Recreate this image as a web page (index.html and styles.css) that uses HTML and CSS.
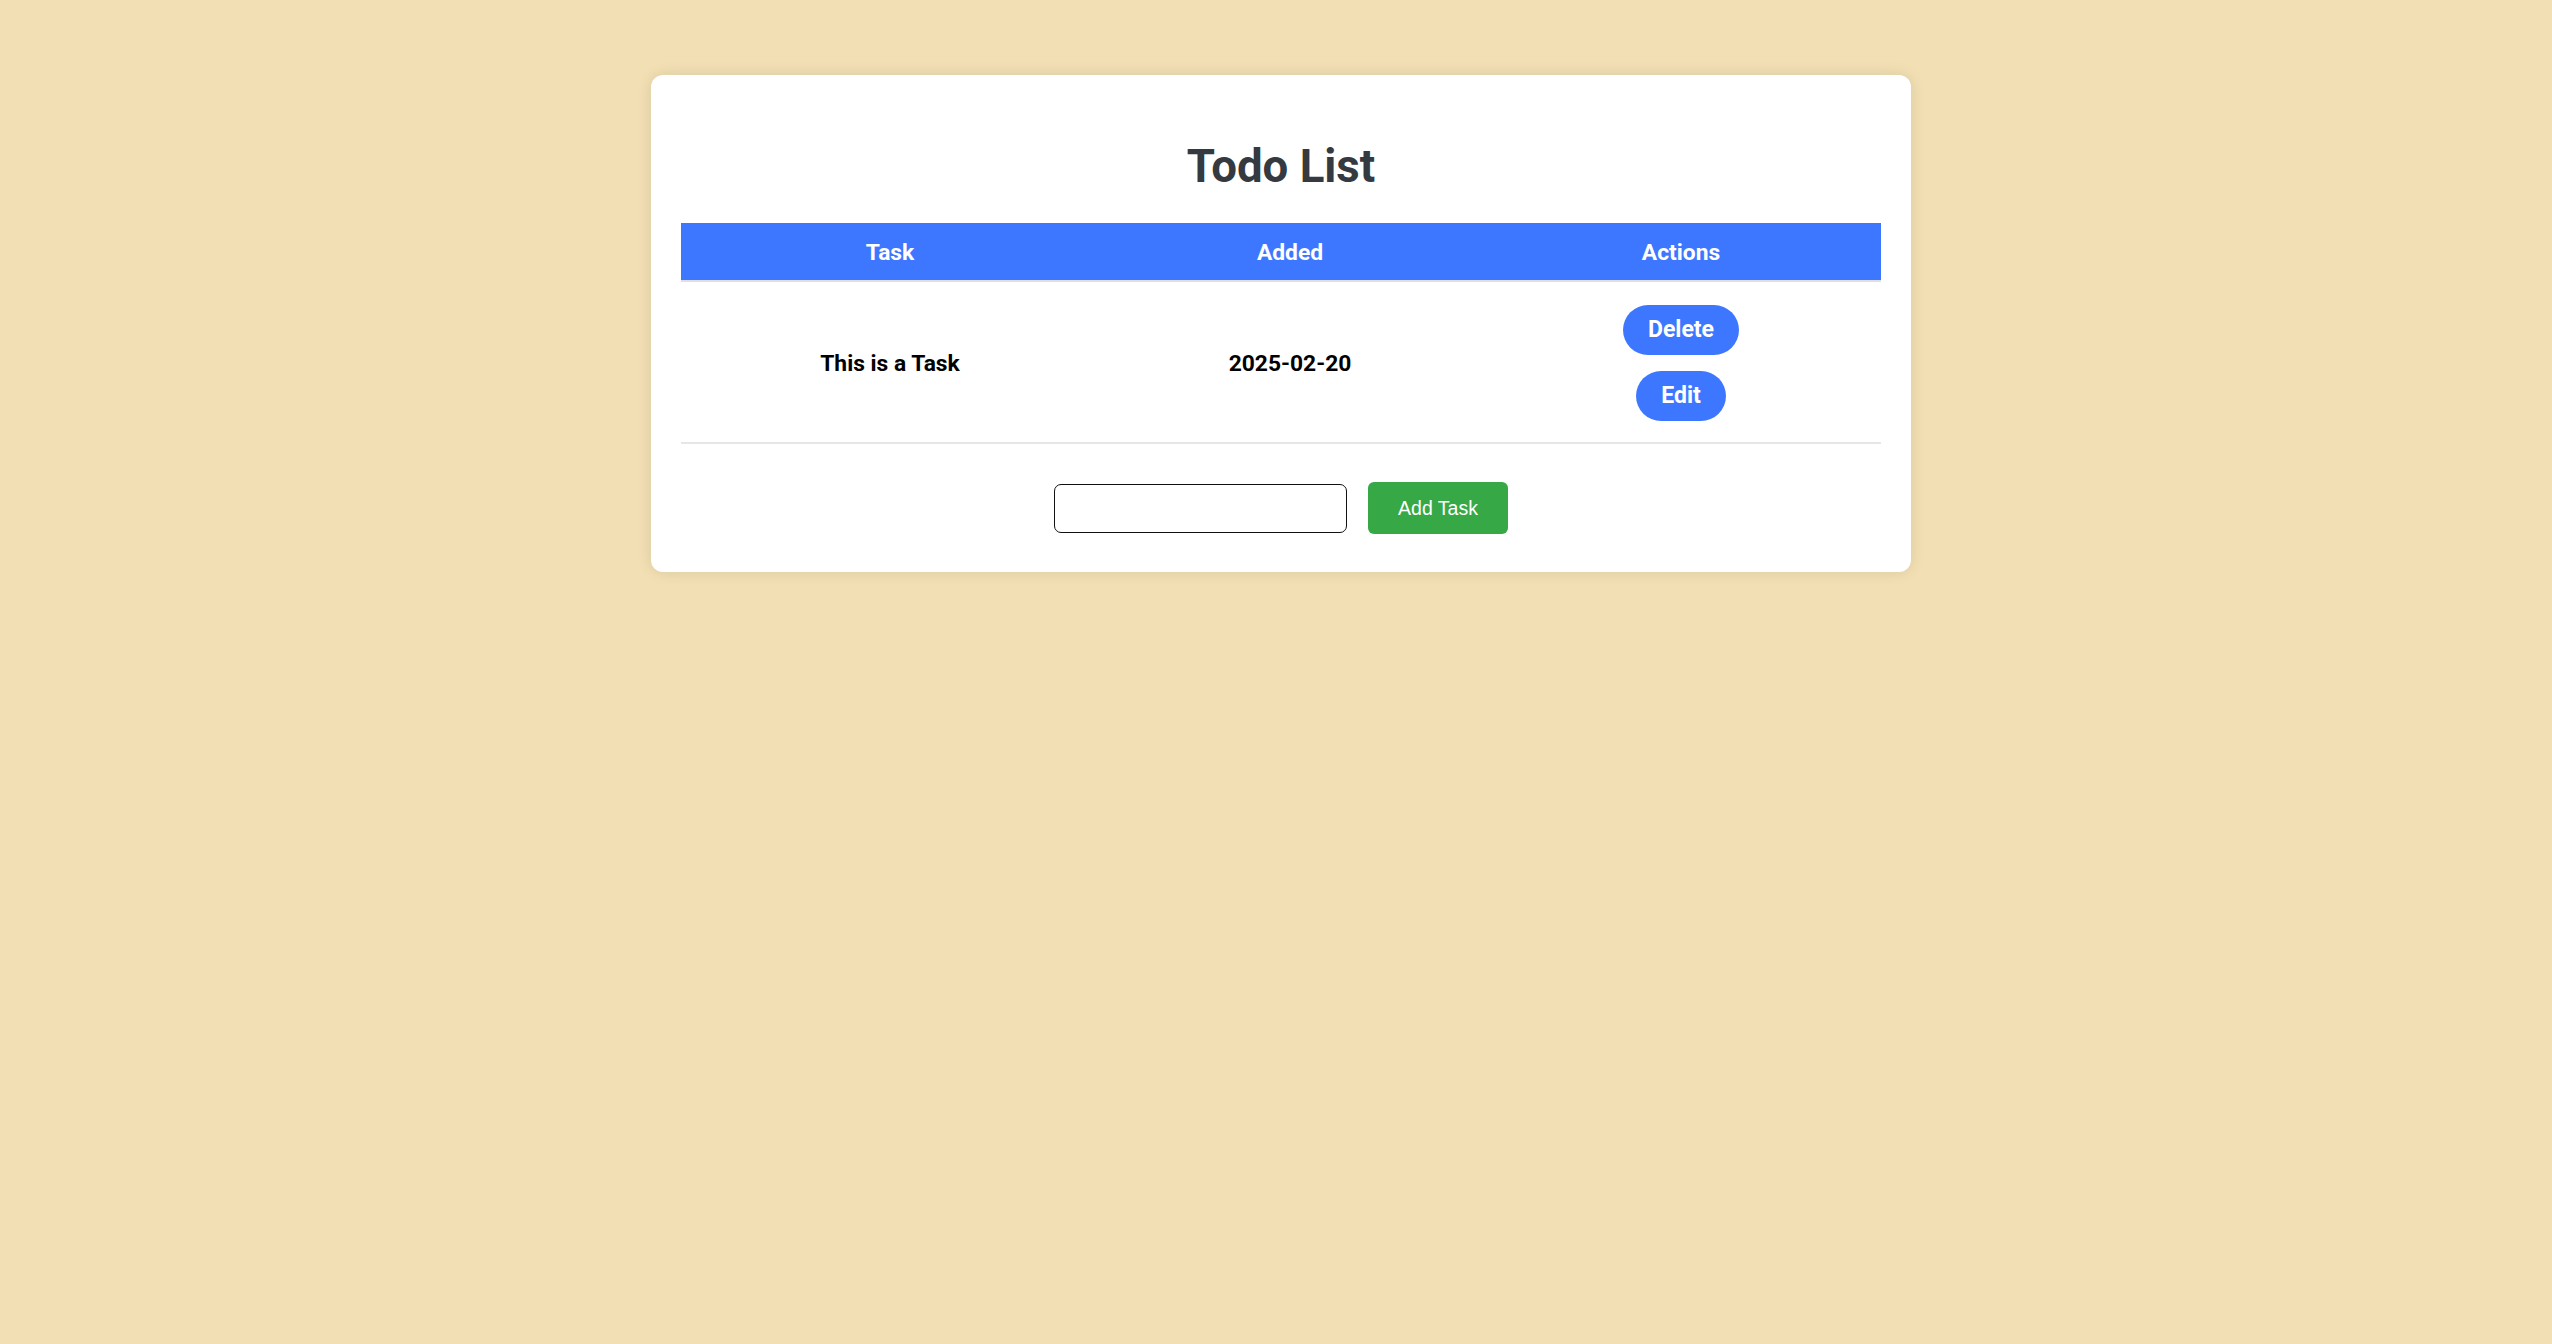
FILE: index.html
```html
<!DOCTYPE html>
<html lang="en">
<head>
<meta charset="utf-8">
<title>Todo List</title>
<link rel="stylesheet" href="styles.css">
</head>
<body>
<div class="page">
  <main class="card">
    <h1 class="title">Todo List</h1>
    <table class="todo-table">
      <colgroup>
        <col class="col-task">
        <col class="col-added">
        <col class="col-actions">
      </colgroup>
      <thead>
        <tr>
          <th>Task</th>
          <th>Added</th>
          <th>Actions</th>
        </tr>
      </thead>
      <tbody>
        <tr>
          <td>This is a Task</td>
          <td>2025-02-20</td>
          <td>
            <div class="actions">
              <button class="pill-btn" type="button">Delete</button>
              <button class="pill-btn" type="button">Edit</button>
            </div>
          </td>
        </tr>
      </tbody>
    </table>
    <form class="add-form">
      <input class="task-input" type="text">
      <button class="add-btn" type="button">Add Task</button>
    </form>
  </main>
</div>
</body>
</html>
```
FILE: styles.css
```css
html, body {
  margin: 0;
  padding: 0;
}

body {
  background: #f2dfb3;
  font-family: Roboto, "Liberation Sans", Arial, sans-serif;
  min-height: 1344px;
}

.page {
  padding: 75px 0 0 10px;
}

.card {
  box-sizing: border-box;
  width: 1260px;
  margin: 0 auto;
  padding: 30px;
  background: #ffffff;
  border-radius: 12px;
  box-shadow: 0 0 15px rgba(0, 0, 0, 0.1);
}

.title {
  margin: 35px 0 29px;
  font-size: 45.6px;
  line-height: 54px;
  font-weight: 700;
  color: #343a40;
  text-align: center;
}

.todo-table {
  width: 1200px;
  border-collapse: collapse;
  table-layout: fixed;
}

.col-task { width: 418px; }
.col-added { width: 382px; }
.col-actions { width: 400px; }

.todo-table th,
.todo-table td {
  padding: 16px 15px 14px;
  text-align: center;
  vertical-align: middle;
  font-weight: 700;
  font-size: 22.8px;
  line-height: 27px;
}

.todo-table th {
  background: #3e77ff;
  color: #ffffff;
  border-bottom: 2px solid #dedee6;
}

.todo-table td {
  color: #000000;
  border-bottom: 2px solid #e6e6e6;
}

.actions {
  display: flex;
  flex-direction: column;
  align-items: center;
  gap: 16px;
  padding: 7px 0;
}

.pill-btn {
  border: none;
  background: #3e77ff;
  color: #ffffff;
  font-family: Roboto, "Liberation Sans", Arial, sans-serif;
  font-weight: 700;
  font-size: 23px;
  line-height: 28px;
  padding: 11px 25px;
  border-radius: 25px;
  cursor: pointer;
}

.add-form {
  display: flex;
  justify-content: center;
  align-items: center;
  gap: 21px;
  margin: 38px 0 8px;
}

.task-input {
  box-sizing: border-box;
  width: 293px;
  height: 49px;
  border: 1.5px solid #111111;
  border-radius: 7px;
  padding: 0 12px;
  font-family: "Liberation Sans", Arial, sans-serif;
  font-size: 20px;
  background: #ffffff;
}

.add-btn {
  box-sizing: border-box;
  height: 52px;
  padding: 0 30px;
  border: none;
  border-radius: 6px;
  background: #37a846;
  color: #ffffff;
  font-family: "Liberation Sans", Arial, sans-serif;
  font-size: 19.5px;
  cursor: pointer;
}
```
